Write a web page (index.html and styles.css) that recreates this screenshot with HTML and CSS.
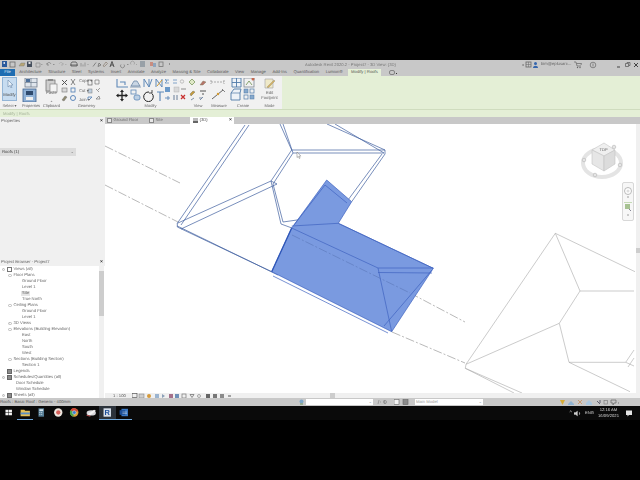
FILE: index.html
```html
<!DOCTYPE html>
<html lang="en">
<head>
<meta charset="utf-8">
<title>Autodesk Revit 2020.2 - Project7 - 3D View: {3D}</title>
<link rel="stylesheet" href="styles.css">
</head>
<body>
<div class="letterbox top"></div>
<div class="app">
  <header class="titlebar">
    <svg class="qat" width="170" height="9" viewBox="0 0 170 9">
      <rect x="2" y="1" width="5" height="6" fill="#2a5a9c"/><rect x="3.500" y="2" width="1.500" height="2" fill="#cfd8e8"/>
      <rect x="10" y="2" width="5" height="5" fill="none" stroke="#6b6b6b" stroke-width=".8"/>
      <path d="M19 6l2-3h4l-1 3z" fill="#b9a774" stroke="#777" stroke-width=".4"/>
      <rect x="27" y="1.500" width="5" height="5.500" fill="#46505e"/><rect x="28.500" y="2" width="2" height="2" fill="#ddd"/>
      <path d="M36 3h4v4h-4zM41 4.500h1.500" fill="none" stroke="#8c8c8c" stroke-width=".7"/>
      <path d="M47 4c1-2 3-2 4 0M47 3v2h2M53 4.500h1.500" fill="none" stroke="#777" stroke-width=".7"/>
      <path d="M59 4c1-2 3-2 4 0M63 3v2h-2M65 4.500h1.500" fill="none" stroke="#a5a5a5" stroke-width=".7"/>
      <path d="M71 6h6V3.500l-1-1.500h-4l-1 1.500zM70 5h8" fill="none" stroke="#555" stroke-width=".8"/>
      <path d="M81 6.500V3M83 6.500V4.500M85 6.500V2.500M87.500 4.500h1" fill="none" stroke="#8a8a8a" stroke-width=".8"/>
      <path d="M93 6.500l3-4M99 3l2 2-3 1.500z" fill="none" stroke="#707070" stroke-width=".8"/>
      <path d="M103 6l3-4 1.500 1.500-3 3z" fill="none" stroke="#8a7d70" stroke-width=".7"/>
      <path d="M110 7l2-5.500L114 7M110.800 5h2.400" fill="none" stroke="#333" stroke-width=".8"/>
      <path d="M121 4.500a2 2 0 1 0 3 0M127 4.500h1.500" fill="none" stroke="#7f7f7f" stroke-width=".8"/>
      <path d="M131 4.500a2 2 0 1 1 3 0M136 4.500h1" fill="none" stroke="#9c9c9c" stroke-width=".8"/>
      <path d="M140 2h5M140 4h5M140 6h5" stroke="#5f6f80" stroke-width=".9"/>
      <rect x="150" y="2" width="3" height="4" fill="#c98d80"/><rect x="153" y="3" width="3" height="4" fill="#8fa5bd"/>
      <rect x="159" y="2" width="4" height="4.500" fill="none" stroke="#777" stroke-width=".8"/>
      <path d="M169 4h1" stroke="#555"/>
    </svg>
    <span class="appname">Autodesk Revit 2020.2 - Project7 - 3D View: {3D}</span>
    <div class="titleright">
      <svg width="18" height="8" viewBox="0 0 18 8"><path d="M2 4l1.500-1v2z" fill="#555"/><rect x="6" y="1" width="5" height="5" fill="none" stroke="#666" stroke-width=".8"/><path d="M8.500 1v5M6 3.500h5" stroke="#666" stroke-width=".5"/><circle cx="15.500" cy="2.500" r="1.500" fill="#3566ad"/><path d="M13 7c0-3 5-3 5 0z" fill="#3566ad"/></svg>
      <span class="user">bim@eplusarc...</span>
      <svg width="8" height="8" viewBox="0 0 8 8"><path d="M0 1h2l1 4h4M2.500 2.500h5L7 4" fill="none" stroke="#666" stroke-width=".7"/><circle cx="3.500" cy="6.500" r=".7" fill="#666"/><circle cx="6" cy="6.500" r=".7" fill="#666"/></svg>
      <svg class="help" width="8" height="8" viewBox="0 0 8 8"><circle cx="4" cy="4" r="2.800" fill="none" stroke="#666" stroke-width=".7"/><path d="M4 2.500v3" stroke="#666" stroke-width=".7"/></svg>
      <svg class="winbtns" width="22" height="8" viewBox="0 0 22 8"><path d="M1 6h3" stroke="#444"/><path d="M9.500 2.500h3v3h-3zM11 2v-.5h3v3h-1" fill="none" stroke="#555" stroke-width=".7"/><path d="M18 2l4 4M22 2l-4 4" stroke="#333" stroke-width=".9"/></svg>
    </div>
  </header>

  <nav class="tabs">
    <span class="tab file">File</span>
    <span class="tab">Architecture</span>
    <span class="tab">Structure</span>
    <span class="tab">Steel</span>
    <span class="tab">Systems</span>
    <span class="tab">Insert</span>
    <span class="tab">Annotate</span>
    <span class="tab">Analyze</span>
    <span class="tab">Massing &amp; Site</span>
    <span class="tab">Collaborate</span>
    <span class="tab">View</span>
    <span class="tab">Manage</span>
    <span class="tab">Add-Ins</span>
    <span class="tab">Quantification</span>
    <span class="tab">Lumion®</span>
    <span class="tab active">Modify | Roofs</span>
    <svg class="tabicon" width="8" height="6" viewBox="0 0 8 6"><rect x=".5" y=".5" width="5" height="4" rx="1.500" fill="none" stroke="#666" stroke-width=".7"/><path d="M7 3.500h1" stroke="#333"/></svg>
  </nav>

  <section class="ribbon">
    <div class="panels">
      <div class="panel w-select">
        <div class="modifybtn">
          <svg width="8" height="8" viewBox="0 0 8 8"><path d="M2 0v7l1.800-1.500L5 8l1-.5-1.200-2.500H7z" fill="#eaf2fa" stroke="#6a87a8" stroke-width=".6"/></svg>
          <span>Modify</span>
        </div>
        <span class="plabel">Select ▾</span>
      </div>
      <div class="panel w-props">
        <svg width="24" height="24" viewBox="0 0 24 24">
          <rect x="6" y="0" width="12" height="9" fill="#dfe5ec" stroke="#6f7c8c" stroke-width=".8"/><path d="M12 0v9M6 4.500h12" stroke="#6f7c8c" stroke-width=".7"/><rect x="7" y="1" width="4" height="3" fill="#4d6f99"/>
          <rect x="4" y="11" width="13" height="13" fill="#8fb1d6" stroke="#3f6390" stroke-width=".8"/><rect x="7" y="13" width="7" height="4" fill="#2f4a6d"/><rect x="7" y="19" width="7" height="3" fill="#f0f0f0"/>
        </svg>
        <span class="plabel">Properties</span>
      </div>
      <div class="panel w-clip">
        <svg width="18" height="24" viewBox="0 0 18 24"><rect x="3" y="2" width="9" height="11" fill="#cfcfcf" stroke="#777" stroke-width=".8"/><rect x="5" y="1" width="5" height="2" fill="#8a8a8a"/><rect x="7" y="6" width="7" height="8" fill="#f4f4f4" stroke="#888" stroke-width=".7"/><path d="M7.500 23.500l1-.8 1 .8z" fill="#444"/></svg>
        <span class="ptext">Paste</span>
        <span class="plabel">Clipboard</span>
      </div>
      <div class="panel w-geo">
        <svg width="44" height="24" viewBox="0 0 44 24">
          <path d="M2 2l5 5M7 2L2 7" stroke="#555" stroke-width="1"/>
          <rect x="2" y="10" width="5" height="4" fill="#d9d9d9" stroke="#777" stroke-width=".6"/>
          <path d="M2 22l3-4 2 1-3 4z" fill="#8f8a70" stroke="#666" stroke-width=".4"/>
          <path d="M11 1l4 6M15 1l-4 6" stroke="#555" stroke-width=".7"/><rect x="11" y="10" width="4" height="4" fill="none" stroke="#4f7eb5" stroke-width=".8"/><circle cx="13" cy="20" r="2.500" fill="none" stroke="#4f7eb5" stroke-width=".9"/>
          <rect x="28" y="2" width="4" height="5" fill="none" stroke="#666" stroke-width=".7"/><rect x="28" y="11" width="4" height="4" fill="#bfcfdf" stroke="#777" stroke-width=".5"/><path d="M28 22v-3h4M29 22l3-3" stroke="#4f7eb5" stroke-width=".8" fill="none"/>
          <path d="M35 2h4v4h-4zM36 11l3 3M40 10l-2 2M36 21l3-3 1 3z" fill="none" stroke="#777" stroke-width=".7"/>
        </svg>
        <div class="geo-text"><span>Cope ▾</span><span>Cut ▾</span><span>Join ▾</span></div>
        <span class="plabel">Geometry</span>
      </div>
      <div class="panel w-modify">
        <svg width="70" height="24" viewBox="0 0 70 24">
          <path d="M1 1v8h11M4 4h5v3" fill="none" stroke="#5f89b8" stroke-width="1.100"/>
          <path d="M15 8l3-5h3l3 5zM14 9h11" fill="#c9d6e4" stroke="#5d7c9f" stroke-width=".7"/>
          <path d="M28 1v8M33 1v8M28 1l5 8M36 1l-3 8" fill="none" stroke="#5f89b8" stroke-width="1"/>
          <path d="M40 9V1l6 8V1" fill="none" stroke="#5f89b8" stroke-width="1"/><path d="M41 8l5-6" stroke="#d29a32" stroke-width="1"/>
          <path d="M6 13v9M1.500 17.500h9" stroke="#222" stroke-width="1.300"/><path d="M6 11.500l-2 2.500h4zM6 23.500l-2-2.500h4zM0 17.500l2.500-2v4zM12 17.500l-2.500-2v4z" fill="#222"/>
          <rect x="15" y="12" width="5" height="4" fill="none" stroke="#5f89b8" stroke-width=".8"/><rect x="18" y="17" width="6" height="5" rx="2" fill="#bcd0e4" stroke="#5f89b8" stroke-width=".8"/>
          <path d="M33 14a4.800 4.800 0 1 0 3 1.500" fill="none" stroke="#222" stroke-width="1"/><path d="M36 12v3h-3" fill="none" stroke="#222" stroke-width=".8"/>
          <path d="M41 14h7M44 14v9" stroke="#5f89b8" stroke-width="1.200"/>
          <path d="M49 2h4M49 5h4M49 1l2 2-2 2" fill="none" stroke="#6893c0" stroke-width=".8"/><path d="M57 2h4M57 5h4" stroke="#6893c0" stroke-width=".8"/>
          <circle cx="66" cy="3.500" r="1.700" fill="none" stroke="#aaa" stroke-width=".7"/>
          <rect x="49" y="9" width="5" height="5" fill="#6a99c9"/><rect x="58" y="9" width="5" height="5" fill="#d9d9d9" stroke="#aaa" stroke-width=".4"/><path d="M65 11h5" stroke="#777" stroke-width=".8"/>
          <path d="M49 20h5M52 18v4" stroke="#5f89b8" stroke-width=".9"/><path d="M58 17v5M61 17v5" stroke="#6a7f98" stroke-width="1"/>
          <path d="M65 17l4 4M69 17l-4 4" stroke="#c8312f" stroke-width="1.300"/>
        </svg>
        <span class="plabel">Modify</span>
      </div>
      <div class="panel w-view">
        <svg width="20" height="24" viewBox="0 0 20 24">
          <path d="M4 1l3 3-3 3-3-3z" fill="#dfe8c8" stroke="#6f8f4f" stroke-width=".7"/><path d="M12 7l3-4 3 1-3 3z" fill="#b6746a" stroke="#775" stroke-width=".4"/>
          <path d="M2 16l3-3 2 1-4 4z" fill="#c59b3c" stroke="#665" stroke-width=".4"/><path d="M12 13h6M14 16h2" stroke="#555" stroke-width="1"/>
          <path d="M3 22l3-2M11 20h3M12 22l3-3" stroke="#6f84a0" stroke-width=".9"/>
        </svg>
        <span class="plabel">View</span>
      </div>
      <div class="panel w-measure">
        <svg width="20" height="24" viewBox="0 0 20 24">
          <path d="M2 4h13M2 2v4M15 2v4" stroke="#8a8a8a" stroke-width=".7" fill="none" stroke-dasharray="2 1"/>
          <path d="M3 21l11-9" stroke="#555" stroke-width=".9"/><circle cx="9" cy="16" r="1.200" fill="#d29a32"/>
          <path d="M13 11l3 3" stroke="#555" stroke-width=".7"/>
        </svg>
        <span class="plabel">Measure</span>
      </div>
      <div class="panel w-create">
        <svg width="28" height="24" viewBox="0 0 28 24">
          <path d="M3 0h9v9H3zM7.500 0v9M3 4.500h9" fill="#eef3f8" stroke="#4f7aa8" stroke-width=".9"/>
          <rect x="15" y="0" width="10" height="9" fill="none" stroke="#7d8895" stroke-width=".8"/><circle cx="24" cy="1" r="1.500" fill="#c46a4f"/><path d="M17 7l3-4 3 4" stroke="#6f8f4f" fill="none" stroke-width=".8"/>
          <path d="M2 15l3-4h7l-1 4v7H2z" fill="#eef3f8" stroke="#4f7aa8" stroke-width=".9"/><path d="M2 15h9" stroke="#4f7aa8" stroke-width=".7"/>
          <rect x="15" y="11" width="4" height="4" fill="#87a9cc" stroke="#4f7aa8" stroke-width=".5"/><rect x="21" y="11" width="4" height="4" fill="none" stroke="#4f7aa8" stroke-width=".7"/><rect x="15" y="17" width="4" height="4" fill="none" stroke="#4f7aa8" stroke-width=".7"/><rect x="21" y="17" width="4" height="4" fill="#87a9cc" stroke="#4f7aa8" stroke-width=".5"/>
        </svg>
        <span class="plabel">Create</span>
      </div>
      <div class="panel w-mode">
        <svg width="12" height="11" viewBox="0 0 12 11"><path d="M1 1h8v9H1z" fill="#efe9c8" stroke="#a9a9a9" stroke-width=".7"/><path d="M3 9l7-7 1 1-7 7z" fill="#d9b35a" stroke="#8a8a8a" stroke-width=".4"/></svg>
        <span class="ptext center">Edit<br>Footprint</span>
        <span class="plabel">Mode</span>
      </div>
    </div>
  </section>

  <div class="optionsbar">Modify | Roofs</div>

  <main class="workspace">
    <aside class="side">
      <section class="properties">
        <div class="panelhead"><span>Properties</span><b>×</b></div>
        <div class="propsbody">
          <div class="selector"><span>Roofs (1)</span><i>⌄</i></div>
        </div>
      </section>
      <section class="browser">
        <div class="panelhead"><span>Project Browser - Project7</span><b>×</b></div>
        <div class="treewrap">
          <ul class="tree">
            <li class="l0"><em>−</em><s class="ic ic-views"></s>Views (all)</li>
            <li class="l1"><em>−</em>Floor Plans</li>
            <li class="l2">Ground Floor</li>
            <li class="l2">Level 1</li>
            <li class="l2"><mark>Site</mark></li>
            <li class="l2">True North</li>
            <li class="l1"><em>−</em>Ceiling Plans</li>
            <li class="l2">Ground Floor</li>
            <li class="l2">Level 1</li>
            <li class="l1"><em>+</em>3D Views</li>
            <li class="l1"><em>−</em>Elevations (Building Elevation)</li>
            <li class="l2">East</li>
            <li class="l2">North</li>
            <li class="l2">South</li>
            <li class="l2">West</li>
            <li class="l1"><em>−</em>Sections (Building Section)</li>
            <li class="l2">Section 1</li>
            <li class="l0 noexp"><s class="ic legend"></s>Legends</li>
            <li class="l0"><em>−</em><s class="ic legend"></s>Schedules/Quantities (all)</li>
            <li class="l1b">Door Schedule</li>
            <li class="l1b">Window Schedule</li>
            <li class="l0"><em>+</em><s class="ic legend"></s>Sheets (all)</li>
          </ul>
          <div class="vscroll"><i class="up"></i><i class="thumb"></i></div>
        </div>
      </section>
    </aside>

    <section class="views">
      <div class="viewtabs">
        <span class="vtab t1"><s></s>Ground Floor</span>
        <span class="vtab t2"><s></s>Site</span>
        <span class="vtab current"><s class="home"></s>{3D}<b>×</b></span>
      </div>
      <div class="viewport">
        <svg class="model" viewBox="105 124 531 269" width="531" height="269" aria-label="3D view of roofs">
          <g class="datum">
            <path d="M105 146L180 183"/>
            <path d="M105 185L178 222"/>
            <path d="M392 332L465 363"/>
            <path d="M410 293L465 322"/>
          </g>
          <g class="ghost">
            <path d="M555.300 233.300L466 364.300L559.300 323.300L580 291L555.300 233.300L635 271.700"/>
            <path d="M580 291H634"/>
            <path d="M559.300 323.300L569 362.300H625.700L634 350M569 362.300L630 391.700"/>
            <path d="M628 367L634 358M625.700 362.300L634 366"/>
            <path d="M466 364.300L465.300 368.300L522 393M465.300 368.300L514 393"/>
          </g>
          <g class="wire">
            <path d="M177.300 223.300L245 125M181 225L249 125"/>
            <path d="M177.300 223.300L271 181L277 184L181 229"/>
            <path d="M177.300 223.300V227L271.700 271.700M177.300 226L278 275"/>
            <path d="M271 181L291.700 150L280 124M273 184L293 153L283 124"/>
            <path d="M291.700 150H385L327 124M293 153H384L335 124"/>
            <path d="M385 150V154L351.700 201.700M382 154L348 200"/>
            <path d="M271 181L281 224L292 228M273 184L283 222L297 220H338"/>
          </g>
          <path class="roof" d="M326.700 180L351.700 201.700L338.300 223.300L433.300 268.300L391.700 331.700L271.700 271.700L291.700 228Z"/>
          <g class="roofline">
            <path d="M326.700 180L351.700 201.700L338.300 223.300L433.300 268.300L391.700 331.700L271.700 271.700L291.700 228Z"/>
            <path d="M291.700 228L378 268L433.300 268M378 268L391.700 331.700M378 272.500L432 273"/>
            <path d="M325 185L347 203M325 185L294 225M291.700 226L338.300 223.300"/>
            <path d="M273 276L388 333M384 326L432 270"/>
            <path d="M338.300 223.300L433.300 268.300"/>
          </g>
          <path class="innerdash" d="M292 235L410 293"/>
          <path class="edge" d="M291.700 228L271.700 271.700"/>
          <path class="cursor" d="M297 152v5.500l1.300-1 1 2 .8-.4-1-2h1.800z"/>
        </svg>

        <svg class="viewcube" width="46" height="46" viewBox="0 0 46 46" aria-label="ViewCube">
          <ellipse cx="23" cy="25" rx="19" ry="14" fill="none" stroke="#e4e4e4" stroke-width="4"/>
          <path d="M13 12L25 5L36 12L25 18Z" fill="#efefef" stroke="#c4c4c4" stroke-width=".6"/>
          <path d="M13 12L25 18V33L13 26Z" fill="#e6e6e6" stroke="#c4c4c4" stroke-width=".6"/>
          <path d="M36 12L25 18V33L36 26Z" fill="#dcdcdc" stroke="#c4c4c4" stroke-width=".6"/>
          <text x="24.500" y="13" class="cubetext">TOP</text>
          <circle cx="5" cy="22" r="1.800" fill="#e5e5e5" stroke="#aaa" stroke-width=".5"/><circle cx="41" cy="27" r="1.800" fill="#e5e5e5" stroke="#aaa" stroke-width=".5"/><circle cx="16" cy="37" r="1.800" fill="#e5e5e5" stroke="#aaa" stroke-width=".5"/><circle cx="35" cy="9" r="1.800" fill="#e5e5e5" stroke="#aaa" stroke-width=".5"/>
        </svg>

        <svg class="navbar" width="12" height="39" viewBox="0 0 12 39" aria-label="Navigation bar">
          <rect x=".5" y=".5" width="11" height="38" rx="1.500" fill="#f7f7f7" stroke="#cfcfcf" stroke-width=".8"/>
          <circle cx="6" cy="9" r="3.500" fill="#fff" stroke="#aaa" stroke-width=".8"/><circle cx="6" cy="9" r="1.500" fill="#ddd"/>
          <path d="M5 15h2" stroke="#888" stroke-width=".8"/><path d="M2 20.500h8" stroke="#b7d2a5" stroke-width=".8"/>
          <rect x="3" y="22" width="5" height="5" fill="#a7c292"/><path d="M7 27l2 2" stroke="#778" stroke-width=".9"/>
          <path d="M5 33h2" stroke="#888" stroke-width=".8"/>
        </svg>
        <div class="canvas-vscroll"><i class="up"></i><i class="grip"></i><i class="down"></i></div>
      </div>
      <div class="viewcontrol">
        <span class="scale">1 : 100</span>
        <svg width="102" height="6" viewBox="0 0 102 6">
          <rect x="0" y=".5" width="5" height="4" fill="none" stroke="#555" stroke-width=".7"/><rect x="7" y="1" width="5" height="4" fill="#cfcfcf" stroke="#777" stroke-width=".5"/>
          <circle cx="17" cy="3" r="2" fill="#d69a3a"/><path d="M23 1h4v4h-4z" fill="#9bb4d0"/><path d="M30 1l3 2-3 2z" fill="#8ba0b8"/><rect x="37" y="1" width="4" height="4" fill="#a5708a"/><rect x="43" y="1" width="4" height="4" fill="#6f90b8"/><rect x="50" y="1" width="4" height="4" fill="none" stroke="#777" stroke-width=".7"/>
          <path d="M58 1.500l2 3 2-3z" fill="none" stroke="#666" stroke-width=".7"/><circle cx="67" cy="3" r="1.500" fill="none" stroke="#888" stroke-width=".7"/>
          <rect x="74" y="1" width="4" height="4" fill="#666"/><rect x="81" y="1" width="4" height="4" fill="#777"/><rect x="88" y="1" width="4" height="4" fill="#8b8b8b"/><path d="M96 3h3" stroke="#555"/>
        </svg>
        <div class="hscroll"><i></i></div>
      </div>
    </section>
  </main>

  <footer class="statusbar">
    <span class="status">Roofs : Basic Roof : Generic - 400mm</span>
    <svg class="pin" width="5" height="6" viewBox="0 0 5 6"><circle cx="2.500" cy="2.500" r="2" fill="#7ea7c9"/><path d="M1 5h3" stroke="#6f9560"/></svg>
    <div class="statusbox wide"><i>⌄</i></div>
    <svg width="20" height="6" viewBox="0 0 20 6"><path d="M2 5l1-4M8 1l1 4M5 3h-1" stroke="#888" stroke-width=".7"/><circle cx="9" cy="3" r="1.500" fill="none" stroke="#777" stroke-width=".6"/></svg>
    <svg class="boxes" width="16" height="6" viewBox="0 0 16 6"><rect x="0" y=".5" width="5" height="5" fill="#f4f4f4" stroke="#666" stroke-width=".6"/><rect x="9" y=".5" width="5" height="5" fill="#8b8b8b" stroke="#666" stroke-width=".6"/></svg>
    <div class="statusbox model-box"><span>Main Model</span><i>⌄</i></div>
    <svg class="statusicons" width="60" height="7" viewBox="0 0 60 7">
      <path d="M1 1h5l-2.500 5z" fill="#d6ac38"/><path d="M9 5l3-3 3 3v1H9z" fill="#8fb2d0"/><path d="M19 1l4 4M23 1l-4 4" stroke="#c99a70" stroke-width="1"/>
      <path d="M27 4l3-3 3 3v2h-6z" fill="#a9c6de"/><path d="M38 2l3 3M41 1v3" stroke="#556" stroke-width=".9"/><rect x="45" y="1.500" width="3.500" height="3.500" fill="none" stroke="#777" stroke-width=".6"/><path d="M52 1h5v3h-2l-1 2v-2h-2z" fill="none" stroke="#666" stroke-width=".7"/><path d="M59 4h1" stroke="#777"/>
    </svg>
  </footer>

  <div class="taskbar">
    <svg class="tb" width="16" height="14" viewBox="0 0 16 14"><path d="M5 4h3v2.700H5zM8.500 4H12v2.700H8.500zM5 7.200h3V10H5zM8.500 7.200H12V10H8.500z" fill="#f2f2f2"/></svg>
    <svg class="tb run" width="16" height="14" viewBox="0 0 16 14"><path d="M3 4h4l1 1h5v6H3z" fill="#e5c056"/><rect x="3" y="7" width="10" height="2" fill="#5b8fc4"/></svg>
    <svg class="tb" width="16" height="14" viewBox="0 0 16 14"><rect x="5" y="2.500" width="6" height="9" fill="#567e96"/><rect x="6" y="3.500" width="4" height="2" fill="#d8e6ee"/><path d="M6 7h4M6 9h4" stroke="#d8e6ee" stroke-dasharray="1 1"/></svg>
    <svg class="tb" width="16" height="14" viewBox="0 0 16 14"><circle cx="8" cy="7" r="4.500" fill="#efe8e0"/><circle cx="8" cy="7" r="2.300" fill="#d6605a"/></svg>
    <svg class="tb" width="16" height="14" viewBox="0 0 16 14"><circle cx="8" cy="7" r="4.500" fill="#d9a43a"/><path d="M8 7L4 4.500A4.500 4.500 0 0 1 12.200 5.500z" fill="#d2453c"/><path d="M8 7L4 4.500A4.500 4.500 0 0 0 7 11.400z" fill="#4ca64f"/><circle cx="8" cy="7" r="2" fill="#3d7fd1" stroke="#eee" stroke-width=".5"/></svg>
    <svg class="tb" width="16" height="14" viewBox="0 0 16 14"><ellipse cx="8" cy="7.500" rx="5" ry="2.800" fill="#d8d8dc"/><path d="M4 9l7-5 2 1-6 5z" fill="#f4f4f4"/><path d="M3 10l4 1" stroke="#c24d4d"/></svg>
    <svg class="tb active" width="16" height="14" viewBox="0 0 16 14"><rect x="4" y="2.500" width="8" height="9" fill="#d5deea"/><text x="8" y="10" class="rlogo">R</text></svg>
    <svg class="tb run" width="16" height="14" viewBox="0 0 16 14"><rect x="5" y="3" width="7" height="8" fill="#3c79c4"/><rect x="3" y="4.500" width="6" height="5" fill="#1d4f98"/><path d="M6 6.500h5M6 8h5" stroke="#dfe9f5" stroke-width=".5"/></svg>
    <div class="tray">
      <span class="tray-glyph">^</span>
      <svg width="7" height="7" viewBox="0 0 7 7"><path d="M0 2.500h1.500L3.500 1v5L1.500 4.500H0zM5 2c1 1 1 2 0 3" fill="#ccc" stroke="#ccc" stroke-width=".3"/></svg>
      <span class="lang">ENG</span>
      <span class="clock">12:16 AM<br>16/09/2021</span>
      <svg class="notify" width="8" height="7" viewBox="0 0 8 7"><path d="M1 .5h6v4.500H4L2.500 6.500V5H1z" fill="#e5e5e5"/></svg>
    </div>
  </div>
</div>
<div class="letterbox"></div>
</body>
</html>
```
FILE: styles.css
```css
* { box-sizing: border-box; }
html, body { margin: 0; height: 100%; background: #000; overflow: hidden; }
body {
  font-family: "Liberation Sans", Arial, sans-serif;
  font-size: 4.2px;
  line-height: 1;
  color: #666;
  text-rendering: geometricPrecision;
}
.letterbox { height: 60px; background: #000; }
.app { width: 640px; height: 360px; display: flex; flex-direction: column; filter: blur(.25px); }
svg { display: block; flex: none; }

.titlebar { height: 9px; flex: none; background: #c8c8c8; display: flex; align-items: center; position: relative; }
.appname { position: absolute; left: 305px; top: 2.500px; color: #777; white-space: nowrap; }
.titleright { margin-left: auto; display: flex; align-items: center; gap: 5px; padding-right: 2px; }
.user { color: #666; margin: 0 0 0 -2px; width: 28px; white-space: nowrap; }
.help { margin-left: 2px; }
.winbtns { margin-left: 14px; }

.tabs { height: 7px; flex: none; background: #c8c8c8; display: flex; align-items: stretch; }
.tab { display: flex; align-items: center; padding: 0 3.300px; color: #5a5a5a; white-space: nowrap; }
.tab.file { width: 15px; background: #1e6db2; color: #dfeaf4; justify-content: center; margin-right: 1px; padding: 0; }
.tab.active { background: #e4efd6; color: #555; margin-left: 2px; }
.tabicon { align-self: center; margin-left: 8px; }

.ribbon { height: 33px; flex: none; background: #e4efd6; display: flex; }
.panels { width: 282px; display: flex; background: #f1f1f1; }
.panel { position: relative; display: flex; justify-content: center; padding-top: 2px; }
.plabel { position: absolute; left: 0; right: 0; bottom: 1.500px; text-align: center; color: #666; white-space: nowrap; font-size: 4px; }
.ptext { position: absolute; color: #666; top: 14px; left: 3px; }
.ptext.center { text-align: center; left: 0; right: 0; top: 14px; line-height: 5px; }
.w-select { width: 19px; }
.w-props { width: 24px; }
.w-clip { width: 16px; justify-content: flex-start; }
.w-clip .ptext { left: 3px; top: 15px; }
.w-geo { width: 55px; justify-content: flex-start; padding-left: 1px; }
.geo-text { position: absolute; left: 20px; top: 3px; display: flex; flex-direction: column; gap: 5.500px; white-space: nowrap; color: #666; }
.w-modify { width: 73px; }
.w-view { width: 22px; }
.w-measure { width: 20px; }
.w-create { width: 28px; }
.w-mode { width: 25px; padding-top: 2px; }
.modifybtn {
  width: 15px; height: 24px; margin-top: -1px;
  background: #c7dcf0; border: .5px solid #93b5d6;
  display: flex; flex-direction: column; align-items: center; gap: 5px; padding-top: 2px; color: #4a4a4a;
}

.optionsbar { height: 8px; flex: none; background: #e4efd6; color: #a6b49a; padding: 1.500px 0 0 3px; border-top: .5px solid #cfdcbe; }

.workspace { height: 282px; flex: none; display: flex; min-height: 0; }
.side { width: 105px; display: flex; flex-direction: column; flex: none; }
.properties { height: 141px; background: #f0f0f0; display: flex; flex-direction: column; flex: none; }
.panelhead { height: 8px; display: flex; align-items: center; justify-content: space-between; padding: 0 2px 0 1px; color: #666; background: #f0f0f0; flex: none; }
.panelhead b { font-size: 5px; color: #333; font-weight: 700; }
.propsbody { flex: 1; padding-top: 23px; }
.selector { width: 76px; height: 8px; background: #dcdcdc; display: flex; justify-content: space-between; align-items: center; padding: 0 2px 0 2px; color: #444; }
.selector i { font-style: normal; color: #777; }
.browser { flex: 1; display: flex; flex-direction: column; min-height: 0; background: #fff; }
.treewrap { flex: 1; display: flex; min-height: 0; background: #fff; overflow: hidden; }
.tree { flex: 1; list-style: none; margin: 0; padding: .5px 0 0; color: #6a6a6a; }
.tree li { height: 6px; display: flex; align-items: center; white-space: nowrap; position: relative; }
.tree em { font-style: normal; width: 3.500px; height: 3.500px; border: .4px solid #bbb; border-radius: 50%; font-size: 3px; display: flex; align-items: center; justify-content: center; margin-right: 2px; color: #888; flex: none; }
.l0 { padding-left: 1.500px; }
.l0.noexp { padding-left: 7px; }
.l1 { padding-left: 8px; }
.l1b { padding-left: 16px; }
.l2 { padding-left: 22px; }
.tree mark { background: #e6e6e6; color: #666; padding: 0 1px; margin-left: -1px; }
.ic { display: block; width: 4.500px; height: 4.500px; margin-right: 2px; flex: none; }
.ic-views { border: .5px dashed #777; }
.legend { background: #8b8b8b; border: .5px solid #666; }
.vscroll { width: 5px; margin-right: 1px; background: #f0f0f0; display: flex; flex-direction: column; align-items: stretch; flex: none; }
.vscroll .up { height: 5px; }
.vscroll .thumb { height: 45px; background: #cdcdcd; }

.views { flex: 1; display: flex; flex-direction: column; min-width: 0; }
.viewtabs { height: 7px; background: #c8c8c8; display: flex; align-items: stretch; flex: none; }
.vtab { display: flex; align-items: center; color: #6e6e6e; white-space: nowrap; position: relative; }
.vtab s { display: block; width: 4.500px; height: 4.500px; border: .5px solid #888; margin-right: 2px; background: #e6e6e6; flex: none; }
.vtab.t1 { width: 41px; padding-left: 2px; }
.vtab.t2 { width: 44px; padding-left: 3px; }
.vtab.current { width: 44px; background: #fff; color: #555; padding-left: 3px; }
.vtab.current b { margin-left: auto; padding-right: 2px; font-size: 5px; color: #333; }
.vtab .home { border: 0; border-bottom: 2px solid #666; background: #bbb; }

.viewport { position: relative; height: 269px; background: #fff; flex: none; overflow: hidden; }
.model { position: absolute; left: 0; top: 0; }
.model path { fill: none; }
.datum path { stroke: #8a8a8a; stroke-width: .6; stroke-dasharray: 9 2 2 2; }
.ghost path { stroke: #a8a8a8; stroke-width: .6; }
.wire path { stroke: #3f5f9f; stroke-width: .7; }
.model .roof { fill: #7a9ae0; }
.roofline path { stroke: #3f63c0; stroke-width: .7; }
.innerdash { stroke: #5570b0; stroke-width: .5; stroke-dasharray: 9 2 2 2; }
.edge { stroke: #2e56b8; stroke-width: 1.300; }
.model .cursor { fill: #fff; stroke: #555; stroke-width: .4; }
.viewcube { position: absolute; right: 15px; top: 14px; }
.cubetext { font-size: 4px; fill: #666; text-anchor: middle; font-family: "Liberation Sans", sans-serif; }
.navbar { position: absolute; left: 517px; top: 58px; }
.canvas-vscroll { position: absolute; right: 0; top: 0; bottom: 0; width: 4px; background: #f0f0f0; display: flex; flex-direction: column; }
.canvas-vscroll .grip { margin-top: 124px; height: 5px; background: #cdcdcd; }
.viewcontrol { height: 6px; background: #f0f0f0; display: flex; align-items: center; flex: none; padding-left: 8px; }
.scale { width: 19px; color: #555; flex: none; }
.hscroll { flex: 1; position: relative; height: 100%; }
.hscroll i { position: absolute; left: 96px; top: 0; width: 5px; height: 6px; background: #cdcdcd; }

.statusbar { height: 8px; background: #c8c8c8; display: flex; align-items: center; flex: none; position: relative; margin-top: -1px; }
.status { width: 299px; padding-left: 0; color: #555; white-space: nowrap; flex: none; }
.pin { margin-right: 2px; }
.statusbox { height: 6px; background: #fff; display: flex; align-items: center; justify-content: space-between; padding: 0 1px; color: #9a9a9a; flex: none; }
.statusbox i { font-style: normal; color: #999; margin-left: auto; }
.wide { width: 67px; margin-right: 3px; }
.boxes { margin-left: -2px; margin-right: 5px; }
.model-box { width: 68px; }
.statusicons { margin-left: 76px; }

.taskbar { height: 14px; background: #0a0a0a; display: flex; flex: none; align-items: stretch; }
.tb { height: 14px; width: 16.500px; border-bottom: 1px solid transparent; }
.tb.run { border-bottom-color: #6fa8dc; }
.tb.active { background: #2c333b; border-bottom-color: #6fa8dc; }
.rlogo { font-size: 8px; font-weight: 700; fill: #1d4f98; text-anchor: middle; font-family: "Liberation Sans", sans-serif; }
.tray { margin-left: auto; display: flex; align-items: center; gap: 2px; color: #d5d5d5; padding-right: 7px; }
.tray-glyph { font-size: 5px; }
.lang { margin-left: 2px; }
.clock { text-align: center; line-height: 6px; margin-left: 2px; }
.notify { margin-left: 4px; }
```
